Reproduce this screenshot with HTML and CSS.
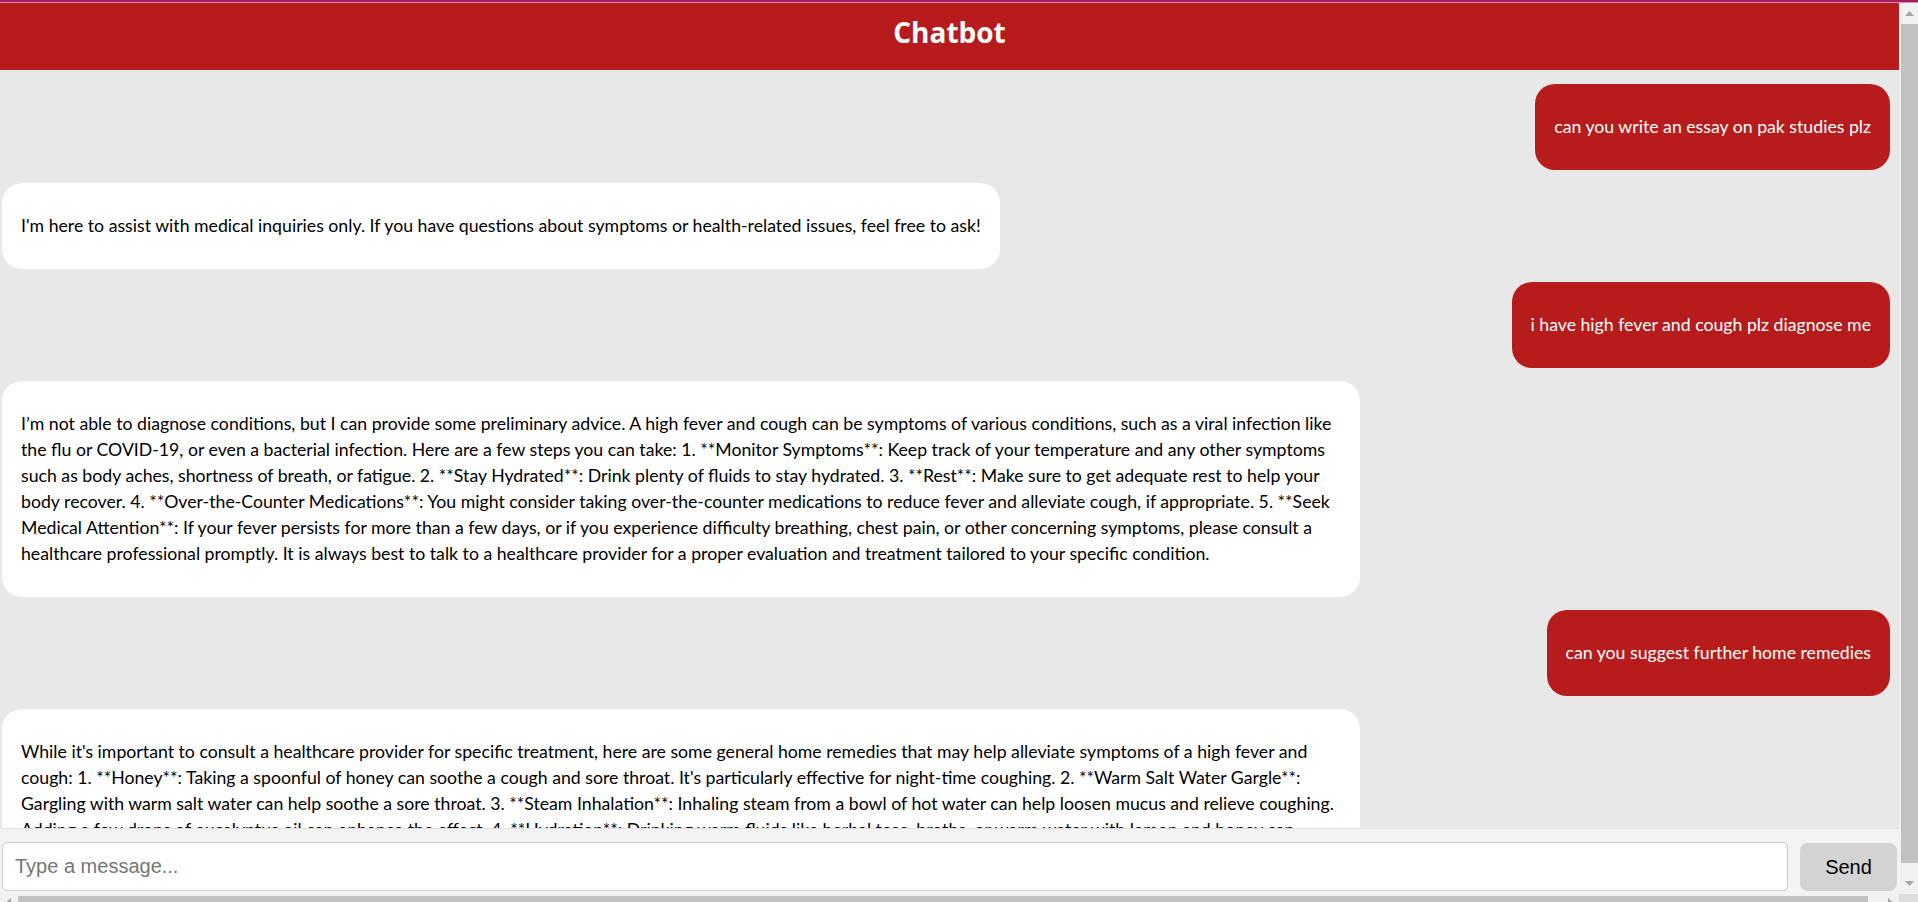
FILE: index.html
```html
<!DOCTYPE html>
<html lang="en">
<head>
<meta charset="utf-8">
<title>Chatbot</title>
<link rel="stylesheet" href="styles.css">
</head>
<body>
<div class="topline"></div>
<div class="window">
  <div class="app">
    <header class="app-header"><h1 class="title">Chatbot</h1></header>
    <main class="chat">
      <div class="msg user">can you write an essay on pak studies plz</div>
      <div class="msg bot">I'm here to assist with medical inquiries only. If you have questions about symptoms or health-related issues, feel free to ask!</div>
      <div class="msg user">i have high fever and cough plz diagnose me</div>
      <div class="msg bot">I’m not able to diagnose conditions, but I can provide some preliminary advice. A high fever and cough can be symptoms of various conditions, such as a viral infection like the flu or COVID-19, or even a bacterial infection. Here are a few steps you can take: 1. **Monitor Symptoms**: Keep track of your temperature and any other symptoms such as body aches, shortness of breath, or fatigue. 2. **Stay Hydrated**: Drink plenty of fluids to stay hydrated. 3. **Rest**: Make sure to get adequate rest to help your body recover. 4. **Over-the-Counter Medications**: You might consider taking over-the-counter medications to reduce fever and alleviate cough, if appropriate. 5. **Seek Medical Attention**: If your fever persists for more than a few days, or if you experience difficulty breathing, chest pain, or other concerning symptoms, please consult a healthcare professional promptly. It is always best to talk to a healthcare provider for a proper evaluation and treatment tailored to your specific condition.</div>
      <div class="msg user">can you suggest further home remedies</div>
      <div class="msg bot">While it's important to consult a healthcare provider for specific treatment, here are some general home remedies that may help alleviate symptoms of a high fever and cough: 1. **Honey**: Taking a spoonful of honey can soothe a cough and sore throat. It's particularly effective for night-time coughing. 2. **Warm Salt Water Gargle**: Gargling with warm salt water can help soothe a sore throat. 3. **Steam Inhalation**: Inhaling steam from a bowl of hot water can help loosen mucus and relieve coughing. Adding a few drops of eucalyptus oil can enhance the effect. 4. **Hydration**: Drinking warm fluids like herbal teas, broths, or warm water with lemon and honey can soothe the throat and keep you hydrated. 5. **Rest**: Getting plenty of rest helps your body fight off the infection.</div>
    </main>
    <form class="composer">
      <input class="composer-input" type="text" placeholder="Type a message...">
      <button class="composer-send" type="button">Send</button>
    </form>
  </div>
  <div class="vscroll">
    <div class="sb-btn"><svg width="9" height="5" viewBox="0 0 9 5"><path d="M0 5 L4.5 0 L9 5 Z" fill="#a3a3a3"/></svg></div>
    <div class="vthumb-wrap"><div class="vthumb"></div></div>
    <div class="sb-btn"><svg width="9" height="5" viewBox="0 0 9 5"><path d="M0 0 L4.5 5 L9 0 Z" fill="#a3a3a3"/></svg></div>
  </div>
</div>
<div class="hscroll">
  <div class="hs-btn"><svg width="5" height="9" viewBox="0 0 5 9"><path d="M5 0 L0 4.5 L5 9 Z" fill="#a3a3a3"/></svg></div>
  <div class="hthumb-wrap"><div class="hthumb"></div></div>
  <div class="hs-btn"><svg width="5" height="9" viewBox="0 0 5 9"><path d="M0 0 L5 4.5 L0 9 Z" fill="#a3a3a3"/></svg></div>
  <div class="corner"></div>
</div>
</body>
</html>
```

FILE: styles.css
```css
* { box-sizing: border-box; }

html, body {
  margin: 0;
  height: 100%;
}

body {
  display: flex;
  flex-direction: column;
  overflow: hidden;
  font-family: "Open Sans", "Liberation Sans", sans-serif;
  background: #e8e8e8;
}

.topline {
  height: 3px;
  flex: none;
  background: #a51d5f;
  border-bottom: 1px solid #d58fb0;
}

.window {
  flex: 1;
  display: flex;
  min-height: 0;
}

.app {
  flex: 1;
  display: flex;
  flex-direction: column;
  min-width: 0;
}

.app-header {
  flex: none;
  height: 67px;
  background: #b71c1c;
  padding-top: 9px;
}

.title {
  margin: 0;
  text-align: center;
  color: #fff;
  font-size: 28px;
  font-weight: 700;
  line-height: 40px;
}

.chat {
  flex: 1;
  min-height: 0;
  overflow: hidden;
  display: flex;
  flex-direction: column;
  gap: 13px;
  padding: 14px 9px 0 2px;
  background: #e8e8e8;
}

.msg {
  flex: none;
  max-width: 1358px;
  padding: 30px 19px;
  border-radius: 20px;
  font-family: Lato, "Open Sans", sans-serif;
  font-size: 17.7px;
  line-height: 26px;
}

.msg.user {
  align-self: flex-end;
  background: #b71c1c;
  color: #fff;
}

.msg.bot {
  align-self: flex-start;
  background: #fff;
  color: #000;
}

.composer {
  flex: none;
  height: 66px;
  margin: 0;
  display: flex;
  align-items: flex-start;
  gap: 12px;
  padding: 13px 2px 0;
  background: #f3f3f3;
  border-top: 1px solid #dedede;
}

.composer-input {
  flex: 1;
  height: 49px;
  padding: 0 12px;
  border: 1px solid #cccccc;
  border-radius: 5px;
  background: #fff;
  font-family: "Liberation Sans", Arial, sans-serif;
  font-size: 20px;
  color: #000;
  outline: none;
}

.composer-input::placeholder {
  color: #757575;
}

.composer-send {
  flex: none;
  width: 97px;
  height: 48px;
  margin-top: 1px;
  border: none;
  border-radius: 8px;
  background: #d3d3d3;
  font-family: "Liberation Sans", Arial, sans-serif;
  font-size: 20px;
  color: #000;
}

.vscroll {
  flex: none;
  width: 19px;
  display: flex;
  flex-direction: column;
  background: #f1f1f1;
}

.sb-btn {
  flex: none;
  height: 21px;
  display: flex;
  align-items: center;
  justify-content: center;
  padding-left: 2px;
}

.vthumb-wrap {
  flex: 1;
  padding: 0 0 10px 2px;
}

.vthumb {
  height: 100%;
  background: #c1c1c1;
}

.hscroll {
  flex: none;
  height: 8px;
  display: flex;
  background: #f1f1f1;
  overflow: hidden;
}

.hs-btn {
  flex: none;
  width: 17px;
  height: 17px;
  display: flex;
  align-items: center;
  justify-content: center;
}

.hthumb-wrap {
  flex: 1;
  padding: 2px 14px 0 1px;
}

.hthumb {
  height: 100%;
  background: #c1c1c1;
}

.corner {
  flex: none;
  width: 19px;
  background: #dcdcdc;
}
```
